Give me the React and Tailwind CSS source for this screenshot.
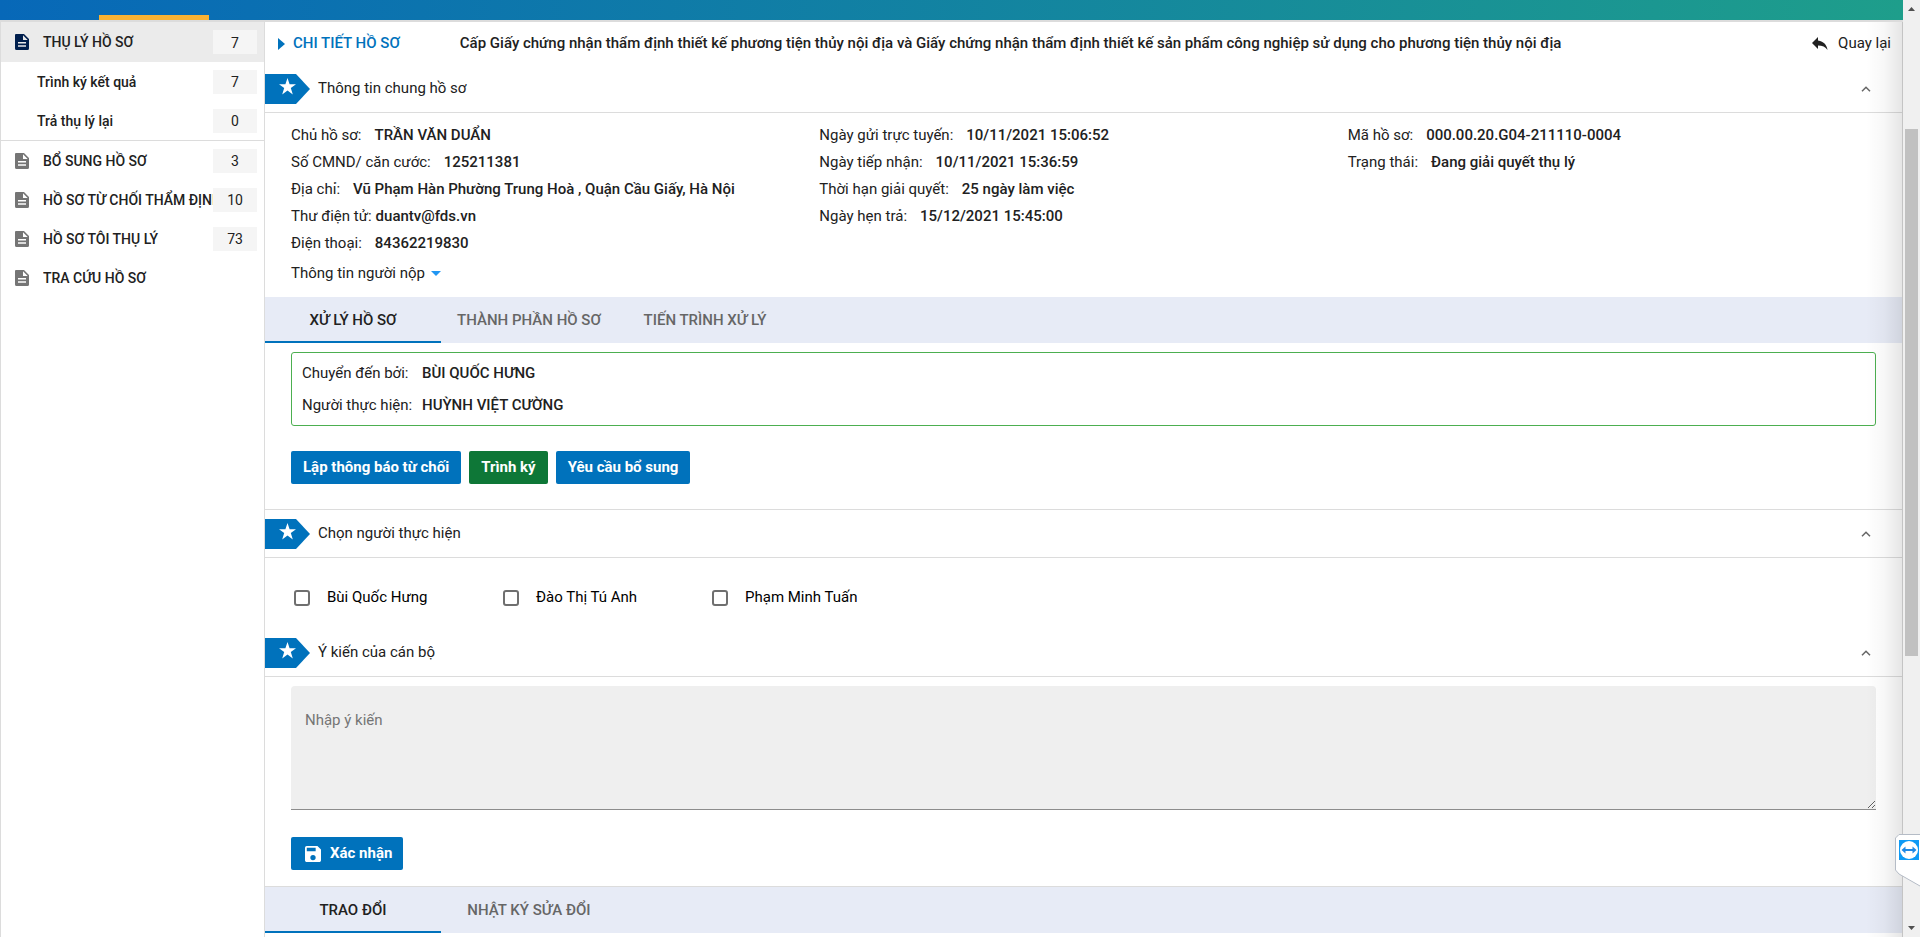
import React, { useState } from 'react';

const sideItems = [
  { label: 'BỔ SUNG HỒ SƠ', count: 3 },
  { label: 'HỒ SƠ TỪ CHỐI THẨM ĐỊNH', count: 10 },
  { label: 'HỒ SƠ TÔI THỤ LÝ', count: 73 },
  { label: 'TRA CỨU HỒ SƠ' },
];

const infoColumns = [
  [
    ['Chủ hồ sơ:', 'TRẦN VĂN DUẨN'],
    ['Số CMND/ căn cước:', '125211381'],
    ['Địa chỉ:', 'Vũ Phạm Hàn Phường Trung Hoà , Quận Cầu Giấy, Hà Nội'],
    ['Thư điện tử:', 'duantv@fds.vn', true],
    ['Điện thoại:', '84362219830'],
  ],
  [
    ['Ngày gửi trực tuyến:', '10/11/2021 15:06:52'],
    ['Ngày tiếp nhận:', '10/11/2021 15:36:59'],
    ['Thời hạn giải quyết:', '25 ngày làm việc'],
    ['Ngày hẹn trả:', '15/12/2021 15:45:00'],
  ],
  [
    ['Mã hồ sơ:', '000.00.20.G04-211110-0004'],
    ['Trạng thái:', 'Đang giải quyết thụ lý'],
  ],
];

const FileIcon = ({ className }) => (
  <svg viewBox="0 0 14 16" className={`h-4 w-[14px] shrink-0 fill-current ${className}`}>
    <path fillRule="evenodd" d="M1 0h8l5 5v9.500a1.500 1.500 0 0 1-1.500 1.500h-11A1.500 1.500 0 0 1 0 14.500V1a1 1 0 0 1 1-1zM8 1.300V6h4.700zM3 8v1.500h8V8zM3 11.300v1.500h8v-1.500z" />
  </svg>
);

const ChevronUp = () => (
  <svg viewBox="0 0 10 6" className="h-[6px] w-[10px] fill-none stroke-[#666]" strokeWidth="1.5">
    <path d="M1 5.200L5 1.200L9 5.200" />
  </svg>
);

const Count = ({ value }) => (
  <span className="flex h-6 w-11 shrink-0 items-center justify-center bg-[#f5f5f5] pt-px">{value}</span>
);

function SectionHeader({ title }) {
  return (
    <div className="flex h-12 items-center border-b border-[#dcdcdc] pr-[31px]">
      <svg viewBox="0 0 45 30" className="h-[30px] w-[45px] shrink-0">
        <path d="M0 0H31L45 15L31 30H0z" fill="#0072bc" />
        <path d="M22.500 4l2.100 6.200h6.400l-5.200 3.900 2 6.300-5.300-3.900-5.300 3.900 2-6.300-5.200-3.900h6.400z" fill="#fff" />
      </svg>
      <h2 className="ml-2 flex-1 text-[15px]">{title}</h2>
      <button type="button" aria-label={`Thu gọn ${title}`}><ChevronUp /></button>
    </div>
  );
}

function Tabs({ items }) {
  const [active, setActive] = useState(0);
  return (
    <div role="tablist" className="flex h-[46px] bg-[#e7ebf6]">
      {items.map((item, i) => (
        <button
          key={item}
          type="button"
          role="tab"
          aria-selected={i === active}
          onClick={() => setActive(i)}
          className={`w-44 border-b-2 pt-[3px] text-[15px] font-medium whitespace-nowrap ${i === active ? 'border-[#0072bc] text-[#212121]' : 'border-transparent text-[#666]'}`}
        >
          {item}
        </button>
      ))}
    </div>
  );
}

function Sidebar() {
  return (
    <nav className="w-[265px] shrink-0 border-x border-[#dcdcdc] text-sm">
      <div className="border-b border-[#dcdcdc]">
        <a href="#thu-ly" className="flex h-10 items-center bg-[#ebebeb] pr-[7px] pl-[14px]">
          <FileIcon className="text-[#001f4d]" />
          <span className="ml-[14px] flex-1 font-medium">THỤ LÝ HỒ SƠ</span>
          <Count value={7} />
        </a>
        <a href="#trinh-ky" className="flex h-[39px] items-center pr-[7px] pl-9">
          <span className="flex-1 font-medium">Trình ký kết quả</span>
          <Count value={7} />
        </a>
        <a href="#tra-lai" className="flex h-[39px] items-center pr-[7px] pl-9">
          <span className="flex-1 font-medium">Trả thụ lý lại</span>
          <Count value={0} />
        </a>
      </div>
      {sideItems.map((item) => (
        <a key={item.label} href="#ho-so" className="flex h-[39px] items-center pr-[7px] pl-[14px]">
          <FileIcon className="text-[#757575]" />
          <span className="ml-[14px] flex-1 overflow-hidden font-medium whitespace-nowrap">{item.label}</span>
          {item.count && <Count value={item.count} />}
        </a>
      ))}
    </nav>
  );
}

function Scrollbar() {
  return (
    <div className="flex w-[17px] shrink-0 flex-col items-center bg-[#f0f0f0]">
      <svg viewBox="0 0 17 17" className="h-[17px] w-[17px] fill-[#505050]"><path d="M5 11L8.500 7L12 11z" /></svg>
      <div className="mt-28 h-[527px] w-[13px] bg-[#c1c1c1]"></div>
      <svg viewBox="0 0 17 17" className="mt-auto h-[17px] w-[17px] fill-[#505050]"><path d="M5 6L8.500 10L12 6z" /></svg>
    </div>
  );
}

export default function App() {
  return (
    <div className="relative flex h-screen overflow-hidden bg-white font-['Roboto',sans-serif] text-[15px] text-[#212121]">
      <div className="flex min-w-0 flex-1 flex-col">
        {/* Bottom edge of the app bar */}
        <header className="flex h-[22px] shrink-0 items-end overflow-hidden border-b-2 border-[#dcdcdc] bg-linear-to-r/srgb from-[#0768b8] to-[#1e9e8b] pl-[99px]">
          <div className="h-[5px] w-[110px] bg-[#f9b233]"></div>
        </header>

        <div className="flex min-h-0 flex-1">
          <Sidebar />

          <main className="relative min-w-0 flex-1 overflow-hidden border-r border-[#c4c4c4]">
            <div className="flex h-[43px] items-center pr-[11px] pl-[13px]">
              <svg viewBox="0 0 7 12" className="h-3 w-[7px] fill-[#0072bc]"><path d="M0 0L7 6L0 12z" /></svg>
              <h1 className="ml-2 font-medium text-[#0072bc]">CHI TIẾT HỒ SƠ</h1>
              <p className="ml-[60px] flex-1 font-medium">
                Cấp Giấy chứng nhận thẩm định thiết kế phương tiện thủy nội địa và Giấy chứng nhận thẩm định thiết kế sản phẩm công nghiệp sử dụng cho phương tiện thủy nội địa
              </p>
              <button type="button" className="flex items-center gap-[10px]">
                <svg viewBox="0 0 16 13" className="h-[13px] w-4 fill-[#212121]"><path d="M6 3.500V0L0 6l6 6V8.400c4.300 0 7.500 1.200 9.500 4.600C15 8.500 12 4.300 6 3.500z" /></svg>
                Quay lại
              </button>
            </div>

            <SectionHeader title="Thông tin chung hồ sơ" />
            <div className="grid grid-cols-3 px-[26px] pt-[9px]">
              {infoColumns.map((rows, i) => (
                <dl key={i}>
                  {rows.map(([label, value, tight]) => (
                    <div key={label} className={`flex h-[27px] items-center whitespace-nowrap ${tight ? 'gap-1' : 'gap-[13px]'}`}>
                      <dt>{label}</dt>
                      <dd className="font-medium">{value}</dd>
                    </div>
                  ))}
                </dl>
              ))}
            </div>
            <button type="button" className="mx-[26px] mb-2 flex h-8 items-center gap-[6px]">
              Thông tin người nộp
              <svg viewBox="0 0 10 5" className="h-[5px] w-[10px] fill-[#2196f3]"><path d="M0 0H10L5 5z" /></svg>
            </button>

            <Tabs items={['XỬ LÝ HỒ SƠ', 'THÀNH PHẦN HỒ SƠ', 'TIẾN TRÌNH XỬ LÝ']} />

            <div className="border-b border-[#dcdcdc] px-[26px] pt-[9px] pb-[25px]">
              <dl className="grid grid-cols-[120px_1fr] rounded-[3px] border border-[#4caf50] px-[10px] py-1 leading-8">
                <dt className="whitespace-nowrap">Chuyển đến bởi:</dt>
                <dd className="font-medium">BÙI QUỐC HƯNG</dd>
                <dt className="whitespace-nowrap">Người thực hiện:</dt>
                <dd className="font-medium">HUỲNH VIỆT CƯỜNG</dd>
              </dl>
              <div className="mt-[25px] flex gap-2">
                <button type="button" className="h-[33px] rounded-[2px] bg-[#0072bc] px-3 font-bold text-white">Lập thông báo từ chối</button>
                <button type="button" className="h-[33px] rounded-[2px] bg-[#0e7737] px-3 font-bold text-white">Trình ký</button>
                <button type="button" className="h-[33px] rounded-[2px] bg-[#0072bc] px-3 font-bold text-white">Yêu cầu bổ sung</button>
              </div>
            </div>

            <SectionHeader title="Chọn người thực hiện" />
            <div className="flex h-[71px] items-center px-[29px] pt-2 text-black">
              {['Bùi Quốc Hưng', 'Đào Thị Tú Anh', 'Phạm Minh Tuấn'].map((name) => (
                <label key={name} className="flex w-[209px] items-center gap-[17px]">
                  <input type="checkbox" className="h-4 w-4 appearance-none rounded-[3px] border-2 border-[#6f6f6f] bg-white checked:bg-[#0072bc]" />
                  {name}
                </label>
              ))}
            </div>

            <SectionHeader title="Ý kiến của cán bộ" />
            <div className="border-b border-[#dcdcdc] px-[26px] pt-[9px] pb-4">
              <textarea
                aria-label="Nhập ý kiến"
                placeholder="Nhập ý kiến"
                className="block h-[124px] w-full rounded-t border-b border-[#8c8c8c] bg-[#efefef] px-[14px] py-[23px] placeholder:text-[#757575]"
              ></textarea>
              <button type="button" className="mt-[27px] flex h-[33px] items-center gap-[6px] rounded-[2px] bg-[#0072bc] px-[11px] font-bold text-white">
                <svg viewBox="3 3 18 18" className="mx-[3px] h-4 w-4 fill-white"><path d="M17 3H5a2 2 0 0 0-2 2v14c0 1.100.9 2 2 2h14c1.100 0 2-.9 2-2V7zm-5 16a3 3 0 1 1 0-6 3 3 0 0 1 0 6zm3-10H5V5h10z" /></svg>
                Xác nhận
              </button>
            </div>

            <Tabs items={['TRAO ĐỔI', 'NHẬT KÝ SỬA ĐỔI']} />

            <div className="pointer-events-none absolute inset-y-0 right-0 w-9 bg-linear-to-r from-transparent via-black/3 to-black/10"></div>
          </main>
        </div>
      </div>

      <Scrollbar />

      {/* TeamViewer side handle */}
      <svg viewBox="0 0 25 54" className="absolute right-0 bottom-[49px] h-[54px] w-[25px]">
        <path d="M25 .5H4L.5 4V36L4 40L25 52" fill="#fff" stroke="#b5bcc6" />
        <path d="M4 6h20v20H4z" fill="#0e9af5" />
        <circle cx="14" cy="16" r="9" fill="#fff" />
        <path d="M6.500 16l4-3.500V15h7v-2.500l4 3.500-4 3.500V17h-7v2.500z" fill="#1e88e5" />
      </svg>
    </div>
  );
}
